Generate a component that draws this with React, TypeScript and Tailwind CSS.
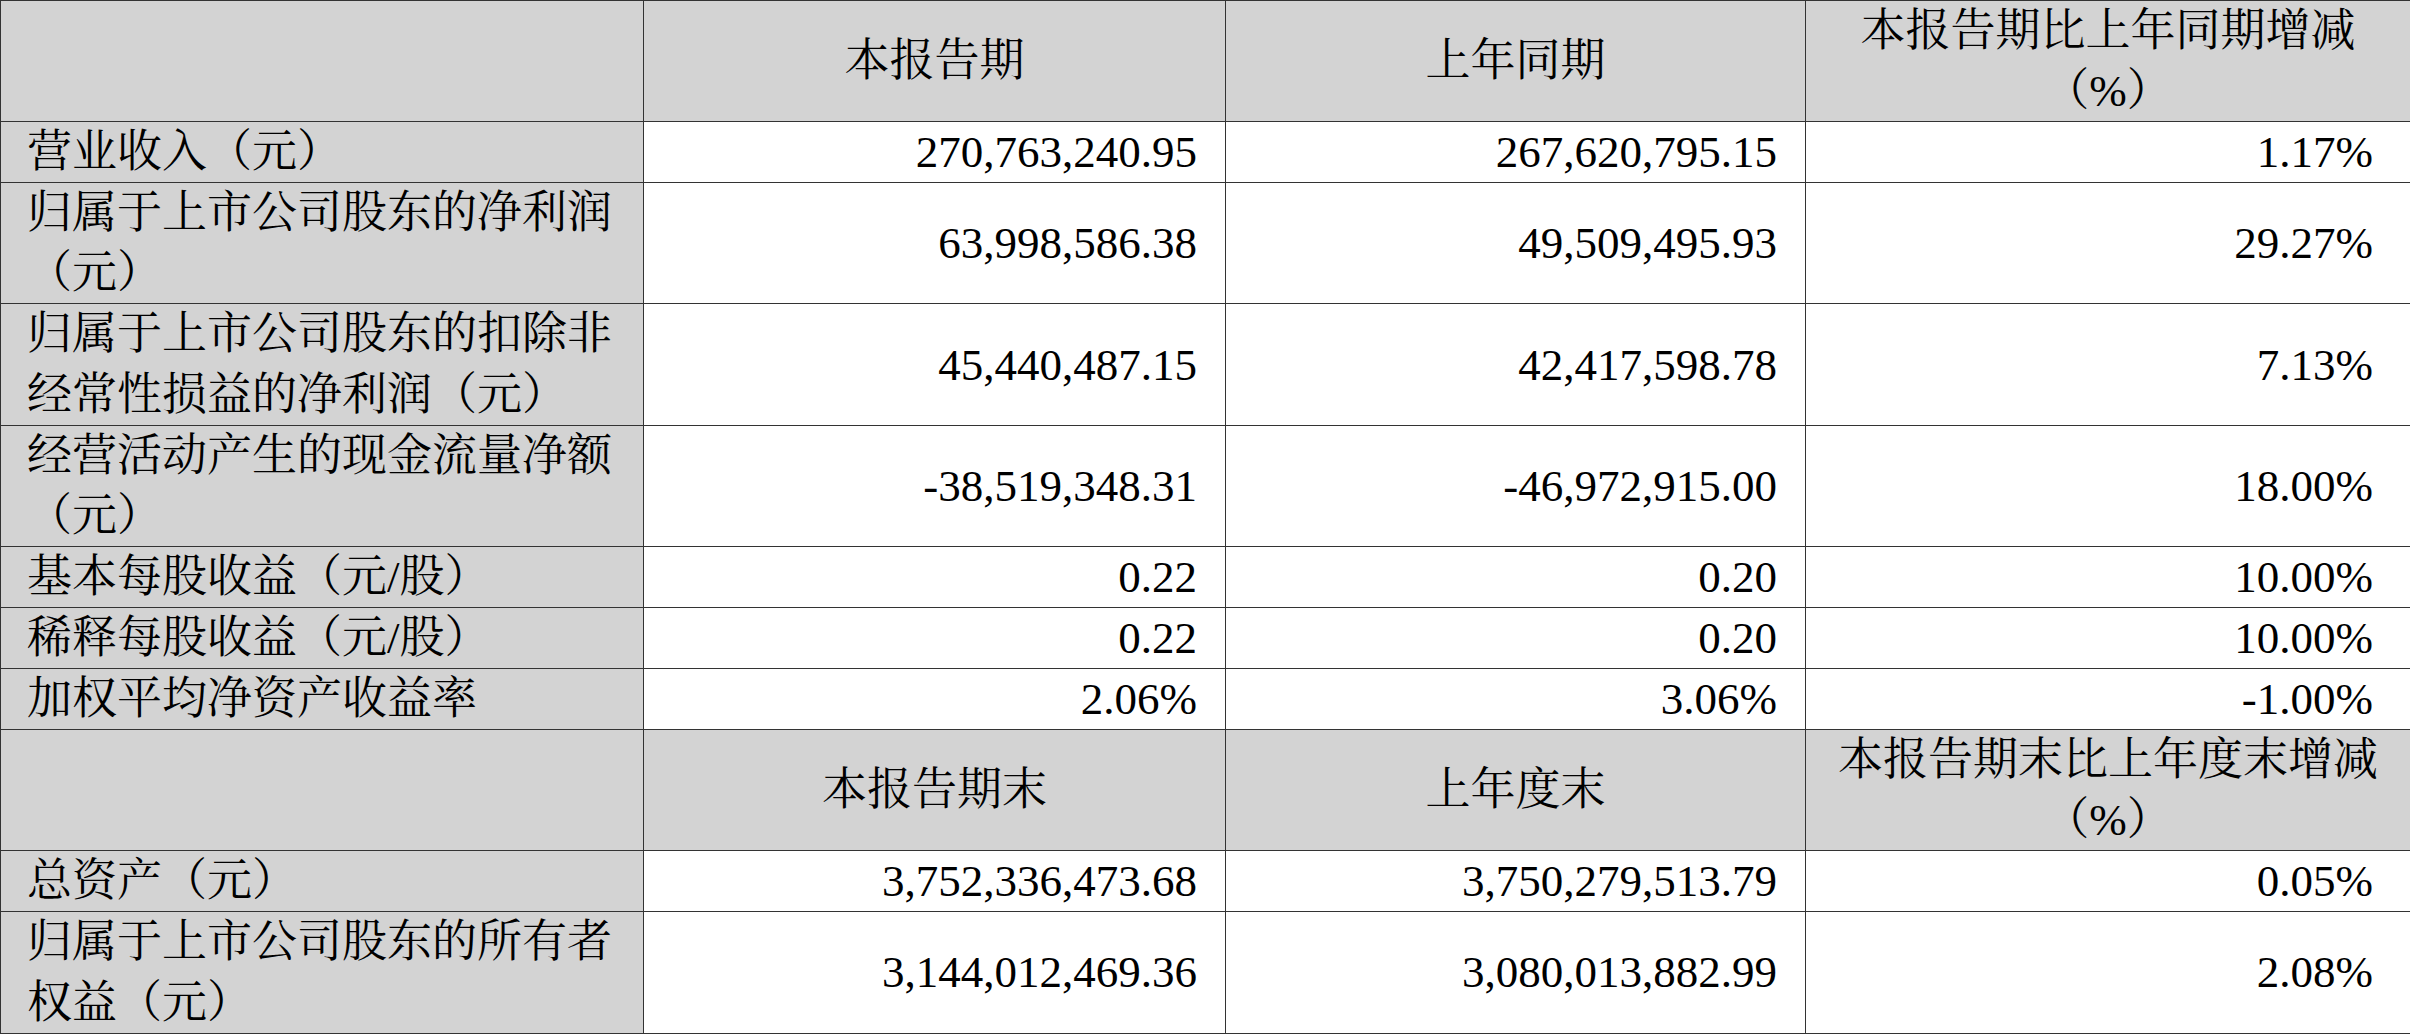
import React from "react";

type Row = {
  label: string;
  current: string;
  previous: string;
  change: string;
};

const topRows: Row[] = [
  { label: "营业收入（元）", current: "270,763,240.95", previous: "267,620,795.15", change: "1.17%" },
  { label: "归属于上市公司股东的净利润（元）", current: "63,998,586.38", previous: "49,509,495.93", change: "29.27%" },
  { label: "归属于上市公司股东的扣除非经常性损益的净利润（元）", current: "45,440,487.15", previous: "42,417,598.78", change: "7.13%" },
  { label: "经营活动产生的现金流量净额（元）", current: "-38,519,348.31", previous: "-46,972,915.00", change: "18.00%" },
  { label: "基本每股收益（元/股）", current: "0.22", previous: "0.20", change: "10.00%" },
  { label: "稀释每股收益（元/股）", current: "0.22", previous: "0.20", change: "10.00%" },
  { label: "加权平均净资产收益率", current: "2.06%", previous: "3.06%", change: "-1.00%" },
];

const bottomRows: Row[] = [
  { label: "总资产（元）", current: "3,752,336,473.68", previous: "3,750,279,513.79", change: "0.05%" },
  { label: "归属于上市公司股东的所有者权益（元）", current: "3,144,012,469.36", previous: "3,080,013,882.99", change: "2.08%" },
];

const cell = "border border-[#333333] align-middle";

const HeaderRow = ({ a, b, c }: { a: string; b: string; c: string }) => (
  <tr className="bg-[#d3d3d3]">
    <td className={cell}></td>
    <td className={`${cell} text-center px-[10px]`}>{a}</td>
    <td className={`${cell} text-center px-[10px]`}>{b}</td>
    <td className={`${cell} text-center px-[8px]`}>
      {c}
      <br />（%）
    </td>
  </tr>
);

const DataRow = ({ row }: { row: Row }) => (
  <tr>
    <td className={`${cell} bg-[#d3d3d3] pl-[26px] pr-[18px] text-left`}>{row.label}</td>
    <td className={`${cell} bg-white text-right pr-[28px]`}>{row.current}</td>
    <td className={`${cell} bg-white text-right pr-[28px]`}>{row.previous}</td>
    <td className={`${cell} bg-white text-right pr-[37px]`}>{row.change}</td>
  </tr>
);

export default function App() {
  return (
    <div className="w-[2410px] h-[1035px] overflow-hidden bg-white">
      <table
        className="table-fixed border-collapse w-[2410px] text-[45px] leading-[60.1px] text-black"
        style={{ fontFamily: '"Liberation Serif", "Noto Serif CJK SC", "Noto Sans CJK SC", serif' }}
      >
        <colgroup>
          <col className="w-[643px]" />
          <col className="w-[582px]" />
          <col className="w-[580px]" />
          <col className="w-[605px]" />
        </colgroup>
        <tbody>
          <HeaderRow a="本报告期" b="上年同期" c="本报告期比上年同期增减" />
          {topRows.map((r) => (
            <DataRow key={r.label} row={r} />
          ))}
          <HeaderRow a="本报告期末" b="上年度末" c="本报告期末比上年度末增减" />
          {bottomRows.map((r) => (
            <DataRow key={r.label} row={r} />
          ))}
        </tbody>
      </table>
    </div>
  );
}
